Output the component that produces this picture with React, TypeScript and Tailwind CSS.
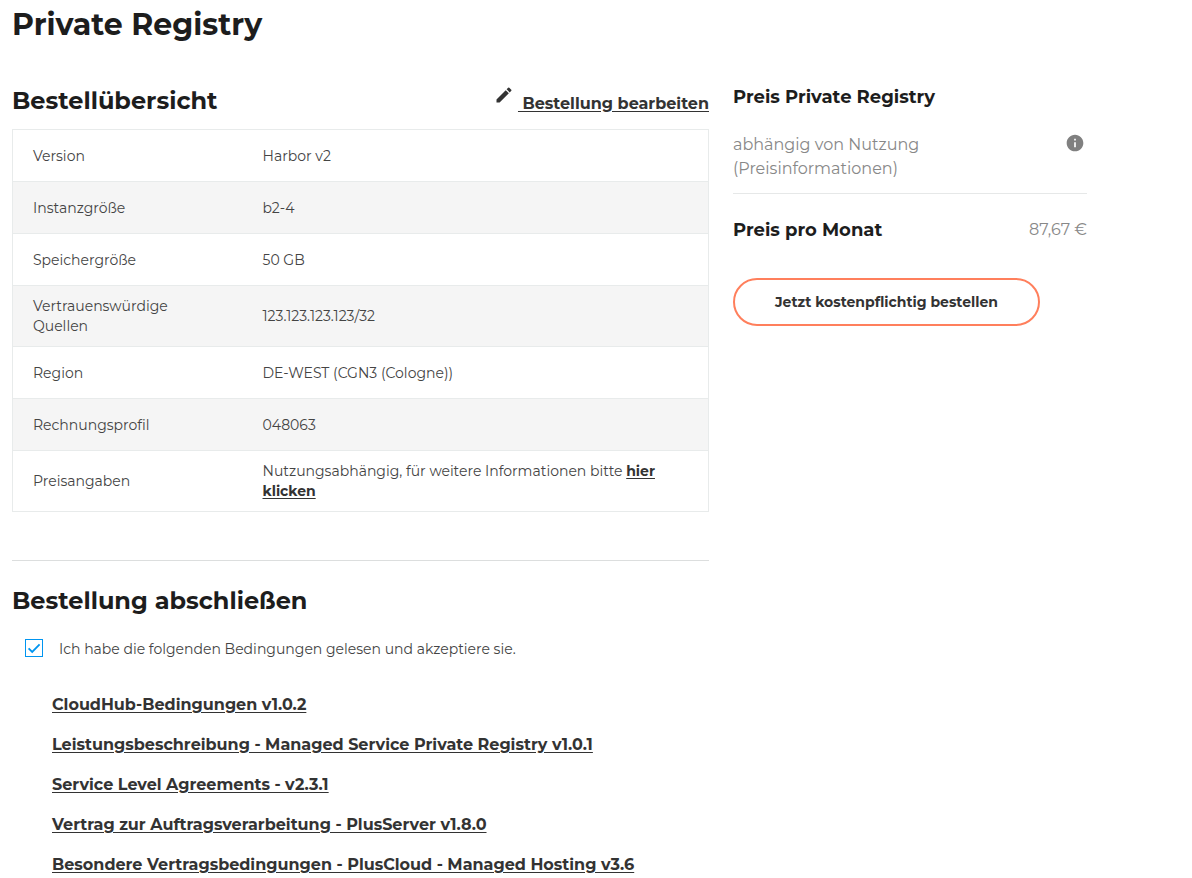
import { useState } from "react";
import { MdEdit, MdInfo } from "react-icons/md";

const linkClass = "font-bold text-[#333] underline underline-offset-2";

const details = [
  { label: "Version", value: "Harbor v2" },
  { label: "Instanzgröße", value: "b2-4" },
  { label: "Speichergröße", value: "50 GB" },
  { label: "Vertrauenswürdige Quellen", value: "123.123.123.123/32" },
  { label: "Region", value: "DE-WEST (CGN3 (Cologne))" },
  { label: "Rechnungsprofil", value: "048063" },
  {
    label: "Preisangaben",
    value: (
      <>
        Nutzungsabhängig, für weitere Informationen bitte{" "}
        <a href="#preise" className={linkClass}>
          hier klicken
        </a>
      </>
    ),
  },
];

const documents = [
  "CloudHub-Bedingungen v1.0.2",
  "Leistungsbeschreibung - Managed Service Private Registry v1.0.1",
  "Service Level Agreements - v2.3.1",
  "Vertrag zur Auftragsverarbeitung - PlusServer v1.8.0",
  "Besondere Vertragsbedingungen - PlusCloud - Managed Hosting v3.6",
];

function OrderDetails() {
  return (
    <table className="mt-3 w-full border-collapse border border-[#e8ebeb] text-left text-[14px] leading-5 text-[#444]">
      <tbody>
        {details.map((row) => (
          <tr key={row.label} className="h-[52px] border-b border-[#e8ebeb] even:bg-[#f5f5f5]">
            <th scope="row" className="w-[230px] py-[10px] pr-12 pl-5 font-normal">
              {row.label}
            </th>
            <td className="py-[10px] pr-5 pl-5">{row.value}</td>
          </tr>
        ))}
      </tbody>
    </table>
  );
}

function Terms() {
  const [accepted, setAccepted] = useState(true);
  return (
    <section className="mt-12 border-t border-[#dcdede] pt-6">
      <h2 className="text-[24px] leading-8 font-bold">Bestellung abschließen</h2>
      <label className="mt-[22px] ml-[13px] flex items-start gap-4 text-[14px] leading-5 text-[#444]">
        <span className="grid size-[18px] place-items-center">
          <input
            type="checkbox"
            checked={accepted}
            onChange={(event) => setAccepted(event.target.checked)}
            className="col-start-1 row-start-1 size-[18px] appearance-none border border-[#0095f0] bg-white"
          />
          {accepted && (
            <svg
              viewBox="0 0 18 18"
              className="pointer-events-none col-start-1 row-start-1 size-[18px]"
              fill="none"
              stroke="#0095f0"
              strokeWidth="1.8"
              aria-hidden="true"
            >
              <path d="M3.6 9.4 7.2 13 14.6 5.4" />
            </svg>
          )}
        </span>
        Ich habe die folgenden Bedingungen gelesen und akzeptiere sie.
      </label>
      <ul className="mt-[34px] ml-10 flex flex-col gap-4 text-[16px] leading-6">
        {documents.map((name) => (
          <li key={name}>
            <a href="#dokument" className={linkClass}>
              {name}
            </a>
          </li>
        ))}
      </ul>
    </section>
  );
}

function PriceSummary() {
  return (
    <aside className="w-full md:w-[354px]">
      <h3 className="mt-1 text-[18px] leading-6 font-bold">Preis Private Registry</h3>
      <div className="mt-6 flex items-start justify-between border-b border-[#e6e8e8] pb-3 text-[16px] leading-6 text-[#888]">
        <p>
          abhängig von Nutzung
          <br />
          (Preisinformationen)
        </p>
        <button type="button" aria-label="Preisinformationen" className="mr-0.5 text-[#808080]">
          <MdInfo className="size-5" />
        </button>
      </div>
      <div className="mt-6 flex items-center justify-between">
        <h3 className="text-[18px] leading-6 font-bold">Preis pro Monat</h3>
        <span className="text-[16px] leading-6 text-[#888]">87,67 €</span>
      </div>
      <button
        type="button"
        className="mt-9 h-12 rounded-full border-2 border-[#ff7f5c] px-10 text-[14px] font-bold text-[#333]"
      >
        Jetzt kostenpflichtig bestellen
      </button>
    </aside>
  );
}

export default function App() {
  return (
    <main className="max-w-[1099px] px-3 pt-[5px] font-[Montserrat,Inter,sans-serif] text-[#1d1d1d]">
      <h1 className="text-[30px] leading-10 font-bold">Private Registry</h1>
      <div className="mt-9 flex flex-col gap-6 md:flex-row">
        <div className="min-w-0 flex-1">
          <div className="flex items-center justify-between pt-1">
            <h2 className="text-[24px] leading-8 font-bold">Bestellübersicht</h2>
            <a href="#bearbeiten" className="flex items-start gap-1 text-[16px] leading-6 font-bold text-[#333]">
              <MdEdit className="-mt-0.5 size-5" />
              <span className="pt-[5px] whitespace-pre underline underline-offset-2"> Bestellung bearbeiten</span>
            </a>
          </div>
          <OrderDetails />
          <Terms />
        </div>
        <PriceSummary />
      </div>
    </main>
  );
}
